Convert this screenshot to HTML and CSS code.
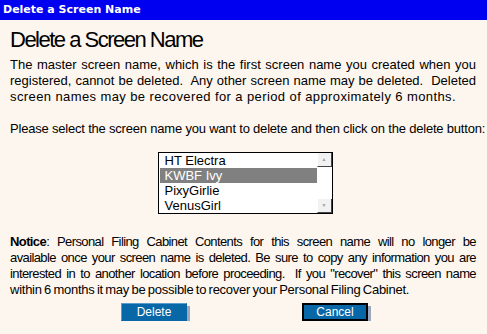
FILE: index.html
```html
<!DOCTYPE html>
<html lang="en">
<head>
  <meta charset="UTF-8">
  <title>Delete a Screen Name</title>
  <link rel="stylesheet" href="styles.css">
</head>
<body>
  <div class="titlebar">Delete a Screen Name</div>
  <div class="content">
    <h1>Delete a Screen Name</h1>
    <p class="intro">
      <span class="line">The master screen name, which is the first screen name you created when you</span>
      <span class="line">registered, cannot be deleted.&nbsp; Any other screen name may be deleted.&nbsp; Deleted</span>
      <span class="line last">screen names may be recovered for a period of approximately 6 months.</span>
    </p>
    <p class="prompt">Please select the screen name you want to delete and then click on the delete button:</p>

    <div class="list-wrap">
      <div class="listbox">
        <div class="items">
          <div class="item">HT Electra</div>
          <div class="item selected">KWBF Ivy</div>
          <div class="item">PixyGirlie</div>
          <div class="item">VenusGirl</div>
        </div>
        <div class="scrollbar">
          <div class="arrow">&#9650;</div>
          <div class="track"></div>
          <div class="arrow">&#9660;</div>
        </div>
      </div>
    </div>

    <p class="notice">
      <span class="line"><b>Notice</b>: Personal Filing Cabinet Contents for this screen name will no longer be</span>
      <span class="line">available once your screen name is deleted. Be sure to copy any information you are</span>
      <span class="line">interested in to another location before proceeding.&nbsp; If you "recover" this screen name</span>
      <span class="line last">within 6 months it may be possible to recover your Personal Filing Cabinet.</span>
    </p>

    <div class="buttons">
      <button class="btn">Delete</button>
      <button class="btn default">Cancel</button>
    </div>
  </div>
</body>
</html>
```

FILE: styles.css
```css
body {
  margin: 0;
  background-color: #fdf6ee;
  font-family: Arial, "Liberation Sans", sans-serif;
  color: #000;
}

.titlebar {
  height: 20px;
  line-height: 20px;
  background-color: #0000f0;
  color: #fff;
  font-family: "DejaVu Sans", sans-serif;
  font-weight: bold;
  font-size: 11px;
  padding-left: 3px;
}

.content {
  padding: 0 11px 0 10px;
}

h1 {
  margin: 7px 0 4px 0;
  font-size: 22px;
  font-weight: normal;
  line-height: 26px;
  letter-spacing: -1.5px;
}

p {
  margin: 0 0 16px 0;
  font-size: 13px;
  line-height: 16px;
}

/* every line is its own block so the breaks match the original */
.line {
  display: block;
  white-space: nowrap;
  text-align: justify;
  text-align-last: justify;
}

.line.last {
  text-align-last: left;
}

.intro .last {
  letter-spacing: 0.4px;
}

.prompt {
  white-space: nowrap;
  letter-spacing: -0.2px;
  margin-bottom: 15px;
}

.notice {
  letter-spacing: -0.6px;
  word-spacing: -1px;
  margin-bottom: 5px;
}

.notice .last {
  letter-spacing: -0.25px;
}

.list-wrap {
  display: flex;
  justify-content: center;
  padding-left: 4px;
  margin-bottom: 20px;
}

.listbox {
  display: flex;
  width: 173px;
  height: 60px;
  border: 1px solid #000;
  background-color: #fff;
}

.items {
  flex: 1;
  padding-left: 1px;
}

.item {
  height: 15px;
  line-height: 15px;
  font-size: 13px;
  padding-left: 5px;
}

.selected {
  background-color: #808080;
  color: #fff;
}

.scrollbar {
  width: 15px;
  display: flex;
  flex-direction: column;
  background-color: #fff;
}

.arrow {
  height: 13px;
  font-size: 5px;
  line-height: 13px;
  text-align: center;
  color: #a0a0a0;
  background-color: #f2f2f2;
  border-left: 1px solid #fff;
  border-bottom: 1px solid #444;
  border-right: 1px solid #444;
}

.track {
  flex: 1;
}

.buttons {
  display: flex;
  justify-content: center;
  gap: 115px;
  padding-left: 3px;
}

.btn {
  width: 66px;
  height: 18px;
  padding: 0;
  font-family: Arial, "Liberation Sans", sans-serif;
  font-size: 12px;
  line-height: 14px;
  color: #fff;
  background-color: #0867a6;
  border: 1px solid #0867a6;
  border-top-color: #5c9ccc;
  border-left-color: #5c9ccc;
  box-shadow: 3px 3px 0 #9ea8bc;
}

.btn.default {
  border: 2px solid #000;
}
```
